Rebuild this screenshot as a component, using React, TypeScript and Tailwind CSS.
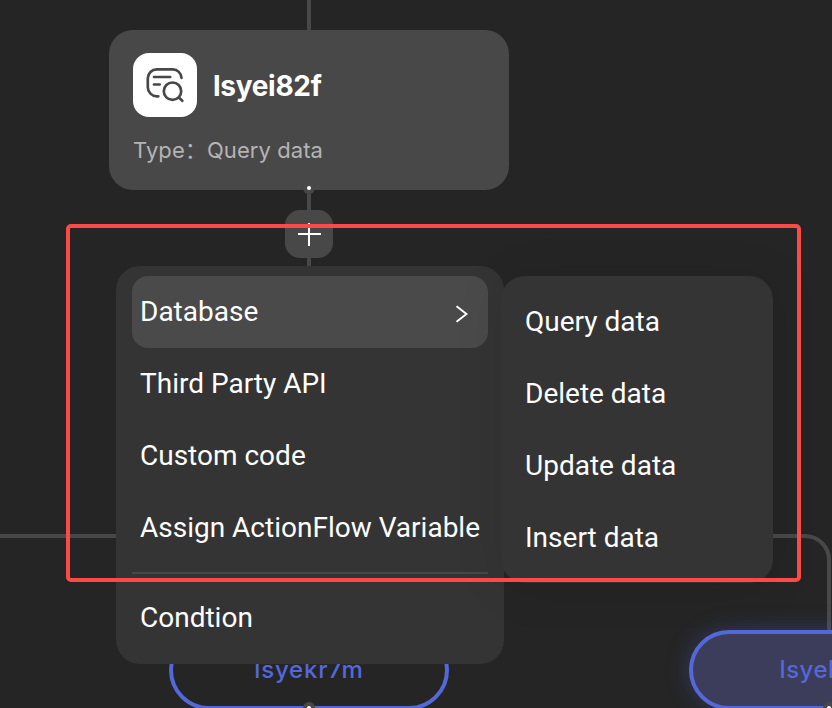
import React from "react";

const MENU = ["Third Party API", "Custom code", "Assign ActionFlow Variable"];
const SUBMENU = ["Query data", "Delete data", "Update data", "Insert data"];

function Port({ className }: { className: string }) {
  return (
    <div className={`absolute flex h-3 w-3 items-center justify-center rounded-full bg-[#484848] ${className}`}>
      <div className="h-1 w-1 rounded-full bg-white" />
    </div>
  );
}

function QueryIcon() {
  return (
    <svg width="40" height="40" viewBox="0 0 40 40" fill="none" stroke="#484848" strokeWidth="2.7" strokeLinecap="round">
      <path d="M13.300 31.300H11.800A9 9 0 0 1 2.800 22.300V13.300A9 9 0 0 1 11.800 4.300H27.800A9 9 0 0 1 36.500 12.800" />
      <path d="M9 12H25.200M9 19.500H14.700" />
      <circle cx="27.500" cy="26.200" r="8.700" />
      <path d="M33.800 32.500L37.300 35.800" />
    </svg>
  );
}

function FlowNode() {
  return (
    <div className="absolute left-[109px] top-[30px] flex h-40 w-[400px] flex-col rounded-[24px] bg-[#484848] px-6 pt-[23px]">
      <div className="flex items-center gap-4">
        <div className="flex h-16 w-16 items-center justify-center rounded-[16px] bg-white">
          <QueryIcon />
        </div>
        <span className="pt-0.5 font-['Inter',sans-serif] text-[28px] font-bold leading-8 tracking-[-0.3px] text-white">lsyei82f</span>
      </div>
      <div className="mt-[17px] whitespace-pre font-['Inter','Noto_Sans_CJK_SC',sans-serif] text-[22px] leading-8 tracking-[0.08px] text-[#b4b4b4]">Type：Query data</div>
    </div>
  );
}

export default function App() {
  return (
    <main className="relative h-[708px] w-[832px] overflow-hidden bg-[#252525] font-['Roboto',sans-serif] text-white">
      <svg className="absolute inset-0" width="832" height="708" fill="none" stroke="#484848" strokeWidth="4">
        <path d="M309 0V266M0 536H805A24 24 0 0 1 829 560V632" />
      </svg>
      <FlowNode />
      <Port className="left-[303px] top-[182px]" />

      <div className="absolute left-[285px] top-[210px] flex h-12 w-12 items-center justify-center rounded-[15px] bg-[#484848]">
        <svg width="24" height="24" viewBox="0 0 24 24" stroke="white" strokeWidth="2">
          <path d="M12 1V24M1 12H24" />
        </svg>
      </div>

      <div className="absolute left-[169px] top-[630px] flex h-20 w-[280px] items-center justify-center rounded-full border-4 border-[#5468da] font-['Inter',sans-serif] text-2xl font-medium tracking-[0.8px] text-[#5468da]">
        lsyekr7m
      </div>
      <div className="absolute left-[689px] top-[630px] flex h-20 w-[280px] items-center justify-center rounded-full border-4 border-[#5468da] bg-[#3b3d5a] font-['Inter',sans-serif] text-2xl font-medium tracking-[0.5px] text-[#5468da] shadow-[0_0_24px_rgba(84,104,218,0.3)]">
        <span className="pl-0.5">lsyel28n</span>
      </div>
      <Port className="left-[303px] top-[702px]" />
      <Port className="left-[823px] top-[702px]" />

      <div className="absolute left-[116px] top-[266px] flex h-[398px] w-[388px] flex-col rounded-[24px] bg-[#343434] px-4 pt-2.5 text-[28px] leading-8">
        <div className="flex h-[72px] shrink-0 items-center justify-between rounded-[16px] bg-[#4a4a4a] pl-2 pr-5">
          <span>Database</span>
          <svg className="mt-1" width="12" height="18" viewBox="0 0 12 18" fill="none" stroke="white" strokeWidth="2">
            <path d="M0.500 1.200L10.500 9L0.500 16.800" />
          </svg>
        </div>
        {MENU.map((label) => (
          <div key={label} className="flex h-[72px] shrink-0 items-center whitespace-nowrap pl-2">{label}</div>
        ))}
        <div className="mt-2 h-0.5 shrink-0 bg-[#484848]" />
        <div className="mt-2 flex h-[72px] shrink-0 items-center pl-2">Condtion</div>
      </div>

      <div className="absolute left-[501px] top-[276px] flex h-[307px] w-[272px] flex-col rounded-[24px] bg-[#343434] pl-6 pt-2.5 text-[28px] leading-8 shadow-[0_4px_48px_rgba(0,0,0,0.1)]">
        {SUBMENU.map((label) => (
          <div key={label} className="flex h-[72px] shrink-0 items-center">{label}</div>
        ))}
      </div>

      <div className="absolute left-[66px] top-[224px] h-[358px] w-[735px] rounded-[5px] border-4 border-[#fc4b46]" />
    </main>
  );
}
